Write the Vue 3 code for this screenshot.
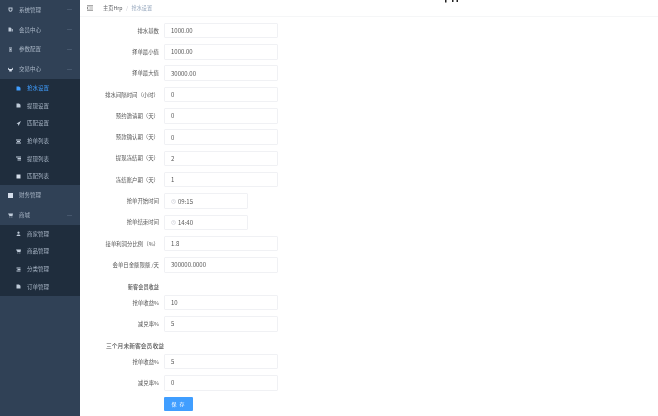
<script setup>
const groups = [
  { name: '系统管理', icon: 'M1 1h8v4.500a4 4 0 0 1-8 0zM3 3v2.500a2 2 0 0 0 4 0V3z' },
  { name: '会员中心', icon: 'M1 1h4l2 2v6H1zM8 4h1.500v5H8z' },
  { name: '参数配置', icon: 'M2 1h6v2H2zM3 4h4v2H3zM2 7h6v2H2z' },
  {
    name: '交易中心',
    icon: 'M0 1l2.500 3h5L10 1v4L7.500 6.500V9h-5V6.500L0 5z',
    bright: true,
    children: [
      { name: '抢水设置', icon: 'M1 1h5l3 2.500V9H1z', active: true },
      { name: '提现设置', icon: 'M1 1h5l3 2.500V9H1z' },
      { name: '匹配设置', icon: 'M10 0L1 5l3 1 1 4z' },
      { name: '抢单列表', icon: 'M0 1h10v2H0zM2 4h6v2H2zM0 7h10v2H0z' },
      { name: '提现列表', icon: 'M0 1h10v2H0zM3 4h7v2H3zM3 7h7v2H3z' },
      { name: '匹配列表', icon: 'M1 1h8v8H1z', bright: true }
    ]
  },
  { name: '财务管理', icon: 'M0 0h10v10H0z', bright: true, noArrow: true },
  {
    name: '商城',
    icon: 'M0 1h10L9 6H3zM3 7h1.500v2H3zM7 7h1.500v2H7z',
    children: [
      { name: '商家管理', icon: 'M5 1a2.200 2.200 0 1 1-.01 0zM1 10c.5-2.500 2-3 4-3s3.500.5 4 3z' },
      { name: '商品管理', icon: 'M0 1h10L9 6H3zM3 7h1.500v2H3zM7 7h1.500v2H7z' },
      { name: '分类管理', icon: 'M1 1h8v2H1zM3 4h6v2H3zM1 7h8v2H1z' },
      { name: '订单管理', icon: 'M1 1h5l3 2.500V9H1z' }
    ]
  }
]

const fields = [
  { label: '排水基数', value: '1000.00' },
  { label: '择单最小值', value: '1000.00' },
  { label: '择单最大值', value: '30000.00' },
  { label: '排水间隔时间（小时）', value: '0' },
  { label: '预约邀请期（天）', value: '0' },
  { label: '预款确认期（天）', value: '0' },
  { label: '提现冻结期（天）', value: '2' },
  { label: '冻结账户期（天）', value: '1' },
  { label: '抢单开始时间', value: '09:15', time: true },
  { label: '抢单结束时间', value: '14:40', time: true },
  { label: '接单利润分比例（%）', value: '1.8' },
  { label: '会单日金额限额 /天', value: '300000.0000' },
  { title: '新客会员收益' },
  { label: '抢单收益%', value: '10' },
  { label: '减兑率%', value: '5' },
  { title: '三个月未新客会员收益', wide: true },
  { label: '抢单收益%', value: '5' },
  { label: '减兑率%', value: '0' }
]
</script>

<template>
  <div class="page">
    <aside class="sidebar">
      <template v-for="g in groups" :key="g.name">
        <div class="top-item">
          <svg class="icon" :class="{ bright: g.bright }" viewBox="0 0 10 10"><path :d="g.icon" /></svg>
          <span>{{ g.name }}</span>
          <i v-if="!g.noArrow" class="arrow"></i>
        </div>
        <div v-if="g.children" class="sub">
          <div v-for="c in g.children" :key="c.name" class="sub-item" :class="{ active: c.active }">
            <svg class="icon" :class="{ bright: c.bright }" viewBox="0 0 10 10"><path :d="c.icon" /></svg>
            <span>{{ c.name }}</span>
          </div>
        </div>
      </template>
    </aside>

    <main class="main">
      <svg class="top-marks" viewBox="0 0 14 3"><path d="M0 0h1.500v2.500H0zM7 0h1.500v2H7zM11.500 0H13v2h-1.500z" /></svg>
      <header class="navbar">
        <svg class="burger" viewBox="0 0 10 10"><path d="M0 1h10v1.200H0zM4 4.400h6v1.200H4zM0 7.800h10V9H0zM0 3.500L2.500 5 0 6.500z" /></svg>
        <span class="crumb">主页Hrp</span>
        <span class="sep">/</span>
        <span class="crumb current">抢水设置</span>
      </header>

      <form class="form" @submit.prevent>
        <template v-for="(f, i) in fields" :key="i">
          <div v-if="f.title" class="title-row" :class="{ wide: f.wide }">{{ f.title }}</div>
          <div v-else class="row">
            <label>{{ f.label }}</label>
            <div class="input" :class="{ time: f.time }">
              <svg v-if="f.time" class="clock" viewBox="0 0 10 10"><circle cx="5" cy="5" r="4" /><path d="M5 2.500V5l2 1" /></svg>
              {{ f.value }}
            </div>
          </div>
        </template>
        <div class="actions"><button type="button">保 存</button></div>
      </form>
    </main>
  </div>
</template>

<style>
html, body { margin: 0; background: #fff; }
</style>

<style scoped>
.page {
  display: flex;
  width: 658px;
  height: 416px;
  overflow: hidden;
  font-family: "Noto Sans CJK SC", "Noto Sans", sans-serif;
}

.sidebar {
  width: 80px;
  flex-shrink: 0;
  background: #304156;
  color: #a9b6c6;
  font-size: 5.5px;
  filter: blur(0.3px);
}

.top-item {
  display: flex;
  align-items: center;
  height: 19.8px;
  padding-left: 8px;
}

.top-item span { margin-left: 6px; }

.arrow {
  width: 5px;
  height: 1px;
  background: #46576d;
  margin-left: auto;
  margin-right: 8px;
}

.icon {
  width: 5px;
  height: 5px;
  fill: #bfcbd9;
  flex-shrink: 0;
}

.icon.bright { fill: #d5deeb; }

.sub { background: #1f2d3d; }

.sub-item {
  display: flex;
  align-items: center;
  height: 17.7px;
  padding-left: 16px;
}

.sub-item span { margin-left: 6px; }

.sub-item.active { color: #409eff; }
.sub-item.active .icon { fill: #409eff; }

.main {
  position: relative;
  flex: 1;
  filter: blur(0.3px);
}

.top-marks {
  position: absolute;
  top: 0;
  left: 365px;
  width: 14px;
  height: 3px;
  fill: #222;
}

.navbar {
  display: flex;
  align-items: center;
  height: 15.5px;
  padding-left: 7px;
  border-bottom: 1px solid #f5f6f7;
  font-size: 5.2px;
  color: #606266;
}

.burger { width: 6px; height: 6px; fill: #555; margin-right: 10px; }
.sep { margin: 0 3.5px; color: #c0c4cc; }
.current { color: #97a8be; }

.form { padding-top: 3.5px; }

.row {
  display: flex;
  align-items: center;
  height: 21.3px;
}

.row label {
  width: 79px;
  padding-right: 5px;
  text-align: right;
  font-size: 5.4px;
  color: #555;
  white-space: nowrap;
}

.input {
  display: flex;
  align-items: center;
  box-sizing: border-box;
  width: 114px;
  height: 15.5px;
  padding-left: 6px;
  border: 1px solid #f0f1f4;
  border-radius: 1px;
  font-size: 6px;
  color: #555;
}

.input.time { width: 84px; }

.clock {
  width: 5px;
  height: 5px;
  margin-right: 2px;
  fill: none;
  stroke: #c0c4cc;
  stroke-width: 1;
}

.title-row {
  box-sizing: border-box;
  height: 16.4px;
  padding: 6px 5px 0 0;
  width: 84px;
  line-height: 10.4px;
  text-align: right;
  font-size: 5.2px;
  font-weight: 500;
  color: #555;
  white-space: nowrap;
}

.title-row.wide {
  padding-right: 0;
  direction: rtl;
  font-size: 5.8px;
}

.actions {
  margin-top: 3px;
  padding-left: 84px;
}

button {
  display: block;
  width: 29px;
  height: 14px;
  padding: 0;
  border: 0;
  border-radius: 1px;
  background: #409eff;
  color: #fff;
  font: inherit;
  font-size: 5px;
  letter-spacing: 1px;
}
</style>
